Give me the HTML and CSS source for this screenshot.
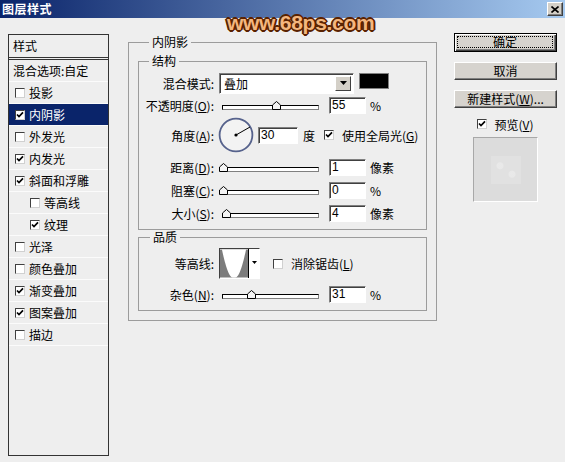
FILE: index.html
```html
<!DOCTYPE html>
<html lang="zh-CN">
<head>
<meta charset="utf-8">
<title>图层样式</title>
<link rel="stylesheet" href="styles.css">
</head>
<body>
<div class="dialog">
  <div class="titlebar">
    <span class="title">图层样式</span>
    <span class="close"><svg width="8" height="7" viewBox="0 0 8 7"><path d="M0.5 0.5 L7.5 6.5 M7.5 0.5 L0.5 6.5" stroke="#000" stroke-width="1.6" fill="none"/></svg></span>
  </div>
  <div class="watermark">www.68ps.com</div>

  <div class="content">
    <div class="styles-list">
      <div class="list-head">样式</div>
      <div class="item plain">混合选项:自定</div>
      <div class="item"><span class="cb"></span>投影</div>
      <div class="item selected"><span class="cb"><svg width="8" height="8" viewBox="0 0 8 8"><path d="M1 3.5 L3 5.6 L7 1.4" fill="none" stroke="#000" stroke-width="1.7"/></svg></span>内阴影</div>
      <div class="item"><span class="cb"></span>外发光</div>
      <div class="item"><span class="cb"><svg width="8" height="8" viewBox="0 0 8 8"><path d="M1 3.5 L3 5.6 L7 1.4" fill="none" stroke="#000" stroke-width="1.7"/></svg></span>内发光</div>
      <div class="item"><span class="cb"><svg width="8" height="8" viewBox="0 0 8 8"><path d="M1 3.5 L3 5.6 L7 1.4" fill="none" stroke="#000" stroke-width="1.7"/></svg></span>斜面和浮雕</div>
      <div class="item sub"><span class="cb"></span>等高线</div>
      <div class="item sub"><span class="cb"><svg width="8" height="8" viewBox="0 0 8 8"><path d="M1 3.5 L3 5.6 L7 1.4" fill="none" stroke="#000" stroke-width="1.7"/></svg></span>纹理</div>
      <div class="item"><span class="cb"></span>光泽</div>
      <div class="item"><span class="cb"></span>颜色叠加</div>
      <div class="item"><span class="cb"><svg width="8" height="8" viewBox="0 0 8 8"><path d="M1 3.5 L3 5.6 L7 1.4" fill="none" stroke="#000" stroke-width="1.7"/></svg></span>渐变叠加</div>
      <div class="item"><span class="cb"><svg width="8" height="8" viewBox="0 0 8 8"><path d="M1 3.5 L3 5.6 L7 1.4" fill="none" stroke="#000" stroke-width="1.7"/></svg></span>图案叠加</div>
      <div class="item"><span class="cb"></span>描边</div>
    </div>

    <div class="settings">
      <fieldset class="group outer">
        <legend class="lg-outer">内阴影</legend>

        <fieldset class="group inner structure">
          <legend class="lg-inner">结构</legend>

          <div class="row">
            <span class="lbl">混合模式:</span>
            <div class="select">
              <span class="select-val">叠加</span>
              <span class="select-btn"><svg width="7" height="4" viewBox="0 0 7 4"><path d="M0 0 H7 L3.5 4 Z" fill="#000"/></svg></span>
            </div>
            <span class="swatch"></span>
          </div>

          <div class="row">
            <span class="lbl">不透明度(<u>O</u>):</span>
            <div class="slider"><div class="track"></div><span class="thumb" style="left:53px"><svg width="9" height="9" viewBox="0 0 9 9"><path d="M0.5 8.5 V4 L4.5 0.5 L8.5 4 V8.5 Z" fill="#f4f4f4" stroke="#000" stroke-width="1"/></svg></span></div>
            <span class="field">55</span>
            <span class="unit">%</span>
          </div>

          <div class="row angle">
            <span class="lbl">角度(<u>A</u>):</span>
            <svg class="dial" width="36" height="36" viewBox="0 0 36 36">
              <circle cx="18" cy="18" r="16.4" fill="#f3f3f3" stroke="#56628c" stroke-width="1.8"/>
              <line x1="18" y1="18" x2="32" y2="10" stroke="#000" stroke-width="1"/>
              <circle cx="18" cy="18" r="1.6" fill="#000"/>
            </svg>
            <span class="field wide">30</span>
            <span class="deg">度</span>
            <span class="cb cb-global"><svg width="8" height="8" viewBox="0 0 8 8"><path d="M1 3.5 L3 5.6 L7 1.4" fill="none" stroke="#000" stroke-width="1.7"/></svg></span>
            <span class="cb-text">使用全局光(<u>G</u>)</span>
          </div>

          <div class="row dist">
            <span class="lbl">距离(<u>D</u>):</span>
            <div class="slider"><div class="track"></div><span class="thumb" style="left:0px"><svg width="9" height="9" viewBox="0 0 9 9"><path d="M0.5 8.5 V4 L4.5 0.5 L8.5 4 V8.5 Z" fill="#f4f4f4" stroke="#000" stroke-width="1"/></svg></span></div>
            <span class="field">1</span>
            <span class="unit">像素</span>
          </div>

          <div class="row next">
            <span class="lbl">阻塞(<u>C</u>):</span>
            <div class="slider"><div class="track"></div><span class="thumb" style="left:0px"><svg width="9" height="9" viewBox="0 0 9 9"><path d="M0.5 8.5 V4 L4.5 0.5 L8.5 4 V8.5 Z" fill="#f4f4f4" stroke="#000" stroke-width="1"/></svg></span></div>
            <span class="field">0</span>
            <span class="unit">%</span>
          </div>

          <div class="row next">
            <span class="lbl">大小(<u>S</u>):</span>
            <div class="slider"><div class="track"></div><span class="thumb" style="left:3px"><svg width="9" height="9" viewBox="0 0 9 9"><path d="M0.5 8.5 V4 L4.5 0.5 L8.5 4 V8.5 Z" fill="#f4f4f4" stroke="#000" stroke-width="1"/></svg></span></div>
            <span class="field">4</span>
            <span class="unit">像素</span>
          </div>
        </fieldset>

        <fieldset class="group inner quality">
          <legend class="lg-inner2">品质</legend>

          <div class="row contour-row">
            <span class="lbl">等高线:</span>
            <div class="contour">
              <svg class="curve" width="29" height="29" viewBox="0 0 29 29">
                <rect width="29" height="29" fill="#7c7c7c"/>
                <path d="M2 0 C5 14, 9 29, 13 29 L16 29 C20 29, 24 14, 27 0 Z" fill="#fff"/>
              </svg>
              <span class="contour-btn"><svg width="5" height="3" viewBox="0 0 5 3"><path d="M0 0 H5 L2.5 3 Z" fill="#000"/></svg></span>
            </div>
            <span class="cb cb-aa"></span>
            <span class="cb-text">消除锯齿(<u>L</u>)</span>
          </div>

          <div class="row noise">
            <span class="lbl">杂色(<u>N</u>):</span>
            <div class="slider"><div class="track"></div><span class="thumb" style="left:28px"><svg width="9" height="9" viewBox="0 0 9 9"><path d="M0.5 8.5 V4 L4.5 0.5 L8.5 4 V8.5 Z" fill="#f4f4f4" stroke="#000" stroke-width="1"/></svg></span></div>
            <span class="field">31</span>
            <span class="unit">%</span>
          </div>
        </fieldset>
      </fieldset>
    </div>

    <div class="side">
      <div class="btn default"><span class="focus">确定</span></div>
      <div class="btn">取消</div>
      <div class="btn">新建样式(<u>W</u>)...</div>
      <div class="preview-row">
        <span class="cb"><svg width="8" height="8" viewBox="0 0 8 8"><path d="M1 3.5 L3 5.6 L7 1.4" fill="none" stroke="#000" stroke-width="1.7"/></svg></span>
        <span>预览(<u>V</u>)</span>
      </div>
      <div class="preview"><span class="preview-thumb"></span></div>
    </div>
  </div>
</div>
</body>
</html>
```
FILE: styles.css
```css
* { box-sizing: border-box; }

html, body {
  margin: 0;
  padding: 0;
}

body {
  width: 565px;
  height: 462px;
  overflow: hidden;
  background: #eeeeee;
  color: #000;
  font-family: "Noto Sans CJK SC", "Noto Sans", sans-serif;
  font-size: 12px;
}

u { text-decoration: underline; text-underline-offset: 1px; }

.dialog {
  position: relative;
  width: 565px;
  height: 462px;
}

/* title bar */
.titlebar {
  height: 18px;
  display: flex;
  align-items: center;
  justify-content: space-between;
  padding: 0 2px 0 2px;
  background: linear-gradient(to right, #0a246a 0%, #a6caf0 100%);
}

.title {
  color: #fff;
  font-weight: bold;
  font-size: 12px;
  line-height: 18px;
  letter-spacing: 0.5px;
}

.close {
  width: 16px;
  height: 14px;
  display: flex;
  align-items: center;
  justify-content: center;
  background: #d4d0c8;
  border: 1px solid;
  border-color: #fff #404040 #404040 #fff;
  box-shadow: inset -1px -1px 0 #808080;
}

.watermark {
  position: absolute;
  top: 12px;
  left: 227px;
  z-index: 5;
  font-family: "Liberation Sans", Arial, sans-serif;
  font-weight: bold;
  font-size: 21px;
  line-height: 21px;
  letter-spacing: -0.3px;
  color: #f4b67e;
  text-shadow:
    -1px -1px 0 #5a2200, 1px -1px 0 #5a2200, -1px 1px 0 #5a2200, 1px 1px 0 #5a2200,
    -2px 0 0 #5a2200, 2px 0 0 #5a2200, 0 -2px 0 #5a2200, 0 2px 0 #5a2200;
}

.content {
  display: flex;
  align-items: flex-start;
}

/* left styles list */
.styles-list {
  margin: 16px 0 0 8px;
  width: 101px;
  height: 422px;
  border: 1px solid #333;
}

.list-head {
  height: 25px;
  line-height: 22px;
  padding-left: 4px;
  border-bottom: 3px double #333;
}

.item {
  height: 22px;
  display: flex;
  align-items: center;
  gap: 4px;
  padding-left: 6px;
  border-bottom: 1px solid #fbfbfb;
  white-space: nowrap;
  line-height: 21px;
}

.item.plain { padding-left: 4px; }
.item.sub { padding-left: 21px; }

.item.selected {
  background: #0a246a;
  color: #fff;
}

/* checkbox */
.cb {
  width: 10px;
  height: 10px;
  flex: none;
  display: inline-flex;
  align-items: center;
  justify-content: center;
  background: #fff;
  border: 1px solid;
  border-color: #404040 #d0d0d0 #d0d0d0 #404040;
}

/* middle settings */
.settings {
  margin: 17px 0 0 19px;
  width: 309px;
}

fieldset.group {
  margin: 0;
  min-width: 0;
  border: 1px solid #9c9c9c;
}

fieldset.group legend {
  padding: 0 3px;
  line-height: 14px;
  font-size: 12px;
}

.outer { padding: 5px 9px 9px; }
.lg-outer { margin-left: 11px; }

.structure { padding: 4px 0 5px; }
.lg-inner { margin-left: 10px; }

.quality { padding: 4px 0 5px; margin-top: 12px; }
.lg-inner2 { margin-left: 11px; }

.row {
  display: flex;
  align-items: center;
  height: 22px;
  white-space: nowrap;
}

.row.angle { height: 36px; margin-top: 1px; }
.row.dist { margin-top: 3px; }
.row.next { margin-top: 1px; }
.row.contour-row { height: 31px; }
.row.noise { margin-top: 4px; }

.lbl {
  width: 75px;
  flex: none;
  text-align: right;
}

.select {
  margin-left: 5px;
  width: 135px;
  height: 21px;
  display: flex;
  background: #fff;
  border: 1px solid;
  border-color: #808080 #fff #fff #808080;
  box-shadow: inset 1px 1px 0 #404040;
}

.select-val {
  flex: 1;
  padding-left: 4px;
  line-height: 19px;
}

.select-btn {
  width: 16px;
  margin: 2px 2px 2px 0;
  display: flex;
  align-items: center;
  justify-content: center;
  background: #d4d0c8;
  border: 1px solid;
  border-color: #fff #404040 #404040 #fff;
}

.swatch {
  align-self: flex-start;
  margin: 1px 0 0 5px;
  width: 30px;
  height: 16px;
  background: #000;
  border: 1px solid #808080;
}

.slider {
  position: relative;
  margin-left: 5px;
  width: 104px;
  height: 9px;
  flex: none;
}

.track {
  margin: 4px 0 0 3px;
  width: 97px;
  height: 5px;
  background: #fff;
  border: 1px solid;
  border-color: #000 #808080 #808080 #000;
}

.thumb {
  position: absolute;
  top: 0;
  width: 9px;
  height: 9px;
  display: block;
  line-height: 0;
}

.field {
  margin-left: 6px;
  width: 37px;
  height: 17px;
  flex: none;
  padding-left: 2px;
  background: #fff;
  border: 1px solid;
  border-color: #808080 #fff #fff #808080;
  box-shadow: inset 1px 1px 0 #404040;
  font-family: "Liberation Sans", Arial, sans-serif;
  font-size: 12px;
  line-height: 15px;
}

.unit { margin-left: 4px; }

.dial { margin-left: 4px; flex: none; }

.field.wide { margin-left: 4px; width: 40px; }

.deg { margin-left: 5px; }

.cb-global { margin-left: 9px; }
.cb-aa { margin-left: 13px; }
.cb-text { margin-left: 8px; }

.contour {
  margin-left: 5px;
  width: 41px;
  height: 31px;
  display: flex;
  border: 1px solid;
  border-color: #404040 #fff #fff #404040;
  background: #fff;
}

.curve {
  display: block;
  border-right: 1px solid #000;
  flex: none;
}

.contour-btn {
  flex: 1;
  display: flex;
  justify-content: center;
  padding-top: 12px;
}

/* right column */
.side {
  margin: 15px 0 0 17px;
  width: 103px;
  display: flex;
  flex-direction: column;
  align-items: center;
}

.btn {
  width: 103px;
  height: 18px;
  margin-top: 10px;
  display: flex;
  align-items: center;
  justify-content: center;
  background: #d6d3ce;
  border: 1px solid;
  border-color: #fff #404040 #404040 #fff;
  box-shadow: inset -1px -1px 0 #808080;
  line-height: 14px;
  white-space: nowrap;
}

.btn.default {
  height: 19px;
  margin-top: 0;
  border: 1px solid #000;
  box-shadow: inset 1px 1px 0 #fff, inset -1px -1px 0 #404040, inset -2px -2px 0 #808080;
  align-items: stretch;
  padding: 2px 3px 3px 2px;
}

.focus {
  flex: 1;
  display: flex;
  align-items: center;
  justify-content: center;
  border: 1px dotted #000;
}

.preview-row {
  margin-top: 9px;
  height: 14px;
  display: flex;
  align-items: center;
  gap: 7px;
}

.preview {
  margin-top: 6px;
  width: 65px;
  height: 65px;
  display: flex;
  align-items: center;
  justify-content: center;
  background: #dcdcdc;
  border: 1px solid;
  border-color: #a8a8a8 #fff #fff #a8a8a8;
}

.preview-thumb {
  width: 30px;
  height: 28px;
  background:
    radial-gradient(circle at 30% 35%, rgba(255,255,255,0.25) 0 3px, transparent 4px),
    radial-gradient(circle at 70% 65%, rgba(255,255,255,0.25) 0 3px, transparent 4px),
    #e1e1e1;
}
```
